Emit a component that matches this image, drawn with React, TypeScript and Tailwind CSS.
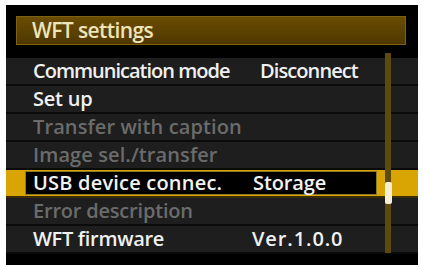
const ROWS = [
  { label: "Communication mode", value: "Disconnect", dim: false, lt: "tracking-[-1px]", vt: "tracking-[-0.9px] ml-[6px]" },
  { label: "Set up", value: "", dim: false, lt: "tracking-[-0.2px]", vt: "" },
  { label: "Transfer with caption", value: "", dim: true, lt: "tracking-[0.1px]", vt: "" },
  { label: "Image sel./transfer", value: "", dim: true, lt: "tracking-[0.1px]", vt: "" },
  { label: "USB device connec.", value: "Storage", dim: false, selected: true, lt: "tracking-[0.2px]", vt: "tracking-[-0.1px] ml-[-1px]" },
  { label: "Error description", value: "", dim: true, lt: "tracking-[-0.2px]", vt: "" },
  { label: "WFT firmware", value: "Ver.1.0.0", dim: false, lt: "tracking-[-0.3px]", vt: "tracking-[0.9px] ml-[-2px]" },
];

export default function App() {
  return (
    <div
      className="w-[423px] h-[265px] bg-white overflow-hidden pl-[6px] pt-[5px]"
      style={{ fontFamily: '"Open Sans", "Noto Sans", sans-serif' }}
    >
      <div className="relative w-[412px] h-[260px] bg-black overflow-hidden">
        {/* title */}
        <div className="ml-[10px] mt-[11px] w-[390px] h-[29px] border border-[#7d6012] bg-gradient-to-b from-[#6a4c02] to-[#4f3800] flex items-center pl-[15px]">
          <span className="text-[21px] font-semibold text-[#efe3b8] leading-none tracking-[-0.6px]">WFT settings</span>
        </div>

        {/* menu rows */}
        <div className="mt-[13px] flex flex-col">
          {ROWS.map((r) =>
            r.selected ? (
              <div key={r.label} className="h-[28px] bg-[#d8a502] border-b-2 border-[#3a2c00] flex items-center pl-[19px]">
                <div className="w-[352px] h-[24px] bg-black border border-[#8c7a2a] flex items-center pl-[7px]">
                  <span className={"w-[221px] shrink-0 text-[20px] font-semibold text-[#f2f2f2] leading-none whitespace-nowrap " + r.lt}>{r.label}</span>
                  <span className={"text-[20px] font-semibold text-[#f2f2f2] leading-none whitespace-nowrap " + r.vt}>{r.value}</span>
                </div>
              </div>
            ) : (
              <div key={r.label} className="h-[28px] bg-[#1e1e1e] border-b-2 border-[#0a0a0a] flex items-center pl-[27px]">
                <span
                  className={
                    "w-[221px] shrink-0 text-[20px] font-semibold leading-none whitespace-nowrap " +
                    r.lt +
                    (r.dim ? " text-[#6b6b6b]" : " text-[#f0f0f0]")
                  }
                >
                  {r.label}
                </span>
                <span className={"text-[20px] font-semibold text-[#f0f0f0] leading-none whitespace-nowrap " + r.vt}>
                  {r.value}
                </span>
              </div>
            )
          )}
        </div>

        {/* scrollbar */}
        <div className="absolute left-[379px] top-[48px] w-[6px] h-[200px] bg-[#5e4a0c]" />
        <div className="absolute left-[379px] top-[177px] w-[7px] h-[22px] bg-[#f6efd6] rounded-[2px]" />
      </div>
    </div>
  );
}
